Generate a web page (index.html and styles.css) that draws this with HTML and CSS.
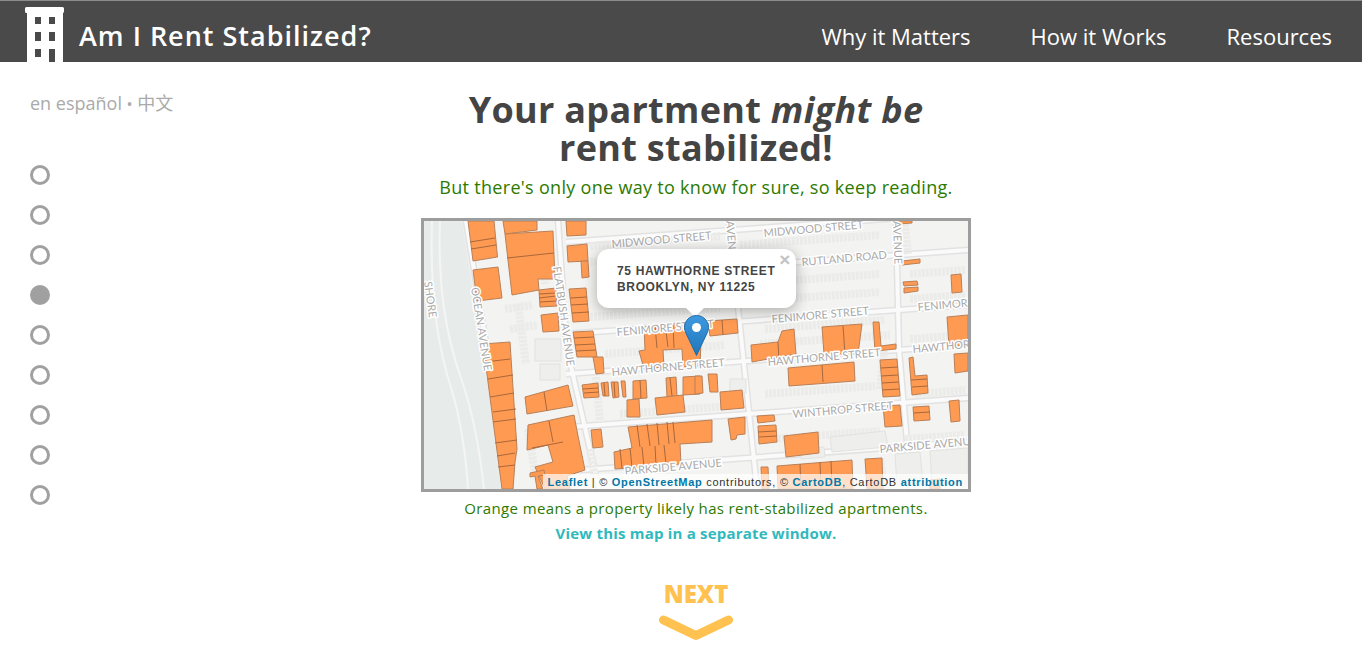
FILE: index.html
```html
<!DOCTYPE html>
<html lang="en">
<head>
    <meta charset="UTF-8">
    <title>Am I Rent Stabilized?</title>
    <link rel="stylesheet" href="styles.css">
</head>
<body>
    <header class="topbar">
        <div class="brand">
            <svg class="logo" viewBox="0 0 39 56" width="39" height="56">
                <path fill="#fff" d="M1.500 1h36a1.500 1.500 0 0 1 1.500 1.500v3a1.500 1.500 0 0 1-1.500 1.500H38v49H2V7h-.5A1.500 1.500 0 0 1 0 5.500v-3A1.500 1.500 0 0 1 1.500 1z"/>
                <path fill="#4a4a4a" d="M10 11h6v7h-6zM24 11h6v7h-6zM10 26h6v9h-6zM24 26h6v9h-6zM10 43h6v8h-6zM24 43h6v13h-6z"/>
            </svg>
            <span class="site-name">Am I Rent Stabilized?</span>
        </div>
        <nav class="topnav">
            <a href="#">Why it Matters</a>
            <a href="#">How it Works</a>
            <a href="#">Resources</a>
        </nav>
    </header>

    <div class="page">
        <aside class="sidebar">
            <div class="lang">en español <span class="sep">•</span> <span class="zh" lang="zh">中文</span></div>
            <ul class="steps">
                <li></li>
                <li></li>
                <li></li>
                <li class="active"></li>
                <li></li>
                <li></li>
                <li></li>
                <li></li>
                <li></li>
            </ul>
        </aside>

        <main class="content">
            <h1>Your apartment <em>might be</em><br>rent stabilized!</h1>
            <p class="lead">But there's only one way to know for sure, so keep reading.</p>

            <div class="map">
                <svg class="tiles" viewBox="424 222 544 268" width="544" height="268">
                    <rect class="land" x="424" y="222" width="544" height="268"/>
                    <path class="park" d="M424 222h38l42 268h-80z"/>
                    <path class="park-path" d="M440 222c-2 60 4 110 22 160 12 36 18 70 22 108M432 222c-2 70 4 120 20 170 10 34 14 66 16 98"/>

                    <g class="roads-casing">
                        <path d="M466 222l44 268M558 222l9 128 32 140M729 222l28 268M896 222l3 128 12 140"/>
                        <path d="M566 243l402-29M730 268l238-17M566 335l402-29M566 375l402-29M570 428l398-29M580 471l388-28"/>
                    </g>
                    <g class="roads">
                        <path d="M466 222l44 268M558 222l9 128 32 140M729 222l28 268M896 222l3 128 12 140"/>
                        <path d="M566 243l402-29M730 268l238-17M566 335l402-29M566 375l402-29M570 428l398-29M580 471l388-28"/>
                    </g>

                    <g class="ghosts">
                        <path d="M590 247l130-10M590 263l130-9M590 318l130-9M740 246l140-10M740 285l140-10M740 303l140-10M605 355l120-9M620 415l110-8M760 345l130-9M765 395l110-8M765 330l120-9M910 275l55-4M910 300l55-4M910 340l55-4M915 395l50-4M770 440l110-8M905 440l60-4M505 310l28-4M510 330l28-4"/>
                        <path d="M518 305l8 60M528 430l8 50M596 378l4 45M590 450l5 30M880 460l5 30M540 235l5 50M905 225l3 30M580 290l-1 12M880 390l4-40"/>
                    </g>
                    <g class="ghost-blocks">
                        <rect x="535" y="340" width="26" height="22"/>
                        <rect x="540" y="365" width="20" height="16"/>
                        <path d="M830 438l55-6 3 16-56 5zM800 450l24-2 1 10-24 2zM930 452l38-3v35l-36 3zM895 455l25-2 3 32-26 1z"/>
                        <rect x="730" y="380" width="16" height="14"/>
                    </g>

                    <g class="lots">
                        <path d="M468 222h26l3.500 36-24.500 4z"/>
                        <path d="M473 271l25-3 4 31-25 3z"/>
                        <path d="M503 222h34v9l-32 4z"/>
                        <path d="M505 235l48-3 2 48h-17l1 11-27 5z"/>
                        <path d="M539 291l17-2 1 18-17 1z"/>
                        <path d="M541 316l17-2 1 18-16 1z"/>
                        <path d="M566 222h20v14l-19 1z"/>
                        <path d="M567 247l20-2 1 17-20 1z"/>
                        <path d="M581 262l7 0 1 16-7 1z"/>
                        <path d="M569 290l17-1 3 33-16 1z"/>
                        <path d="M573 333l20-1 4 26-20 0z"/>
                        <path d="M593 358l10 0 1 16-8 1z"/>
                        <path d="M483 345l27-2 7 107-2 13-2 27h-11z"/>
                        <path d="M525 398l43-12 5 21-46 8z"/>
                        <path d="M528 426l46-10 4 21 7 34-18 6 3 13h-25l-10-22 18-5-5-17-21 5z"/>
                        <path d="M530 474l14-3 1 5-7 1 5 13h-6l-2-13-5 1z"/>
                        <path d="M582 386l16-2 1 14-15 1z"/>
                        <path d="M601 384l7-1 1 14-6 0z"/>
                        <path d="M611 383l7 0 1 15-6 1z"/>
                        <path d="M621 382l4 0 1 16-3 0z"/>
                        <path d="M633 382l13-1 1 18-14 1z"/>
                        <path d="M627 401l12-1 1 18-13 0z"/>
                        <path d="M666 379l10-1 1 19-10 1z"/>
                        <path d="M655 399l28-3 2 17-28 3z"/>
                        <path d="M683 378l17-1v18l-17 1z"/>
                        <path d="M695 377l7 0 1 17-8 1z"/>
                        <path d="M708 375l9 0 1 18-8 0z"/>
                        <path d="M720 393l22-2 2 18-23 2z"/>
                        <path d="M591 431l10-1 2 18-10 1z"/>
                        <path d="M628 428l84-7v22l-32 2 1 20-66 5-1-17 18-4z"/>
                        <path d="M728 420l17-2v17l-8 1-1 4-5 1z"/>
                        <path d="M644 328l26-3 17-1v2l14 15-1 26-17 1-1-18-19 1 1 17-20 2-5-18 6-1z"/>
                        <path d="M708 322l29-2 1 14-28 3z"/>
                        <path d="M751 346l27-3 4-11 12-2 2 25-44 8z"/>
                        <path d="M788 369l66-6 1 19-66 5z"/>
                        <path d="M822 328l40-3-4 30-34 0z"/>
                        <path d="M873 323l6 0 2 24 15-2v5l-21 2z"/>
                        <path d="M951 276l10-1 1 18-10 1z"/>
                        <path d="M902 262l18-2v4l-18 2z"/>
                        <path d="M903 283l14-1 1 4-14 1z"/>
                        <path d="M904 289l14-1v4l-14 2z"/>
                        <path d="M898 222h14v2l-13 1z"/>
                        <path d="M947 318l21-2v31h-19z"/>
                        <path d="M880 361l17-1 3 37-17 1z"/>
                        <path d="M909 359l4-1 2 19 12-1 1 18-16 2z"/>
                        <path d="M954 355l14-1v18l-13 2z"/>
                        <path d="M883 407l17-1 2 21-17 1z"/>
                        <path d="M913 408l16-1 1 14-16 1z"/>
                        <path d="M949 402l10-1 1 21-9 1z"/>
                        <path d="M757 417l17-1 1 6-17 2z"/>
                        <path d="M758 427l18-1 1 17-18 2z"/>
                        <path d="M784 437l34-4 1 21-33 4z"/>
                        <path d="M761 468l7 0 1 22h-7z"/>
                        <path d="M777 467l75-6 1 29h-75z"/>
                        <path d="M865 460l17-1 1 31h-16z"/>
                        <path d="M930 481l10-1v10h-10z"/>
                    </g>
                    <g class="lot-lines">
                        <path d="M470 243l25-4M471 250l25-4M507 259l47-5M539 295l17-1M539 299l17-2M540 303l17-1"/>
                        <path d="M570 299l17-1M571 306l17-1M572 314l17-1M574 339l20-1M575 346l20-1M576 352l20-1"/>
                        <path d="M485 363l25-3M488 380l25-4M490 398l24-4M493 413l23-3M493 423l23-3M495 444l22-3M497 457l18-3M498 468l17-2"/>
                        <path d="M544 393l3 19M549 422l4 21M532 449l31-6"/>
                        <path d="M583 390l15-1M584 394l15-1M604 384l1 13M614 383l1 15M640 381l1 18M670 379l2 18"/>
                        <path d="M637 426l3 22M647 425l3 22M657 424l2 22M667 423l2 22M673 423l2 21M620 450l2 19M630 449l2 19M642 448l2 20M655 447l1 19M664 446l2 19"/>
                        <path d="M655 327l2 22M665 325l3 23M673 325l1 24M722 321l1 15M822 366l1 17M843 327l2 28M778 343l1 19"/>
                        <path d="M881 369l17-1M881 377l17-1M882 384l17-1M882 391l17-1M911 381l16-1M912 388l16-1"/>
                        <path d="M914 414l16-1M758 433l18-1M759 438l18-1M800 465l1 24M820 463l1 26M831 462l1 27"/>
                    </g>

                    <g class="labels">
                        <text transform="translate(612 249) rotate(-5)">MIDWOOD STREET</text>
                        <text transform="translate(764 238) rotate(-5)">MIDWOOD STREET</text>
                        <text transform="translate(802 267) rotate(-5)">RUTLAND ROAD</text>
                        <text transform="translate(617 337) rotate(-5)">FENIMORE STREET</text>
                        <text transform="translate(772 324) rotate(-5)">FENIMORE STREET</text>
                        <text transform="translate(918 312) rotate(-5)">FENIMORE</text>
                        <text transform="translate(612 377) rotate(-5)">HAWTHORNE STREET</text>
                        <text transform="translate(768 367) rotate(-5)">HAWTHORNE STREET</text>
                        <text transform="translate(913 354) rotate(-5)">HAWTHORNE</text>
                        <text transform="translate(793 419) rotate(-5)">WINTHROP STREET</text>
                        <text transform="translate(625 476) rotate(-5)">PARKSIDE AVENUE</text>
                        <text transform="translate(880 454) rotate(-5)">PARKSIDE AVENUE</text>
                        <text transform="translate(471 289) rotate(81)">OCEAN AVENUE</text>
                        <text transform="translate(553 268) rotate(82)">FLATBUSH AVENUE</text>
                        <text transform="translate(726 222) rotate(85)">AVENUE</text>
                        <text transform="translate(893 222) rotate(88)">AVENUE</text>
                        <text transform="translate(424 283) rotate(82)">SHORE</text>
                    </g>
                </svg>

                <div class="attribution">
                    <a href="#">Leaflet</a> | © <a href="#">OpenStreetMap</a> contributors, © <a href="#">CartoDB</a>, CartoDB <a href="#">attribution</a>
                </div>

                <div class="popup">
                    <span class="popup-close">×</span>
                    75 HAWTHORNE STREET<br>BROOKLYN, NY 11225
                </div>

                <svg class="pin" viewBox="0 0 25 41" width="25" height="41">
                    <defs>
                        <linearGradient id="pin-fill" x1="0" y1="0" x2="0" y2="1">
                            <stop offset="0" stop-color="#3d9ae0"/>
                            <stop offset="1" stop-color="#2075b8"/>
                        </linearGradient>
                    </defs>
                    <path fill="url(#pin-fill)" stroke="#1f6dab" d="M12.500 .5C5.900 .5 .5 5.800 .5 12.400c0 2.300 .8 4.500 1.800 6.500L12.500 40.500l10.200-21.600c1-2 1.800-4.200 1.800-6.500C24.500 5.800 19.100 .5 12.500 .5z"/>
                    <circle cx="12.500" cy="12.500" r="4.500" fill="#fff"/>
                </svg>
            </div>

            <p class="caption">Orange means a property likely has rent-stabilized apartments.</p>
            <p class="map-link"><a href="#">View this map in a separate window.</a></p>

            <a class="next" href="#">
                <span>NEXT</span>
                <svg viewBox="0 0 74 26" width="74" height="26">
                    <path fill="none" stroke="#ffc14f" stroke-width="9" stroke-linecap="round" stroke-linejoin="round" d="M4.500 5L37 20.500 69.500 5"/>
                </svg>
            </a>
        </main>
    </div>
</body>
</html>
```

FILE: styles.css
```css
body {
    margin: 0;
    font-family: 'Open Sans', 'Noto Sans CJK SC', sans-serif;
    background-color: #fff;
    color: #444;
    overflow: hidden;
}
a {
    text-decoration: none;
    color: inherit;
}
p {
    margin: 0;
}

/* header */
.topbar {
    height: 61px;
    background-color: #4a4a4a;
    border-top: 1px solid #8c8c8c;
    display: flex;
    justify-content: space-between;
    padding: 0 30px 0 25px;
}
.brand {
    display: flex;
    align-items: flex-end;
    gap: 15px;
}
.logo {
    display: block;
}
.site-name {
    color: #fff;
    font-size: 27px;
    font-weight: 600;
    letter-spacing: 1px;
    line-height: 69px;
    height: 61px;
}
.topnav {
    display: flex;
    gap: 60px;
}
.topnav a {
    color: #fff;
    font-size: 22px;
    line-height: 71px;
    height: 61px;
}

/* left column */
.page {
    display: grid;
    grid-template-columns: 180px 1fr;
    padding-right: 150px;
}
.sidebar {
    padding: 29px 0 0 30px;
}
.lang {
    color: #aaa;
    font-size: 18px;
    line-height: 24px;
}
.sep {
    font-size: 16px;
}
.zh {
    font-size: 18px;
}
.steps {
    list-style: none;
    margin: 49px 0 0;
    padding: 0;
    display: flex;
    flex-direction: column;
    gap: 20px;
}
.steps li {
    width: 20px;
    height: 20px;
    box-sizing: border-box;
    border: 3px solid #a0a0a0;
    border-radius: 50%;
}
.steps .active {
    background-color: #a0a0a0;
}

/* middle column */
.content {
    display: flex;
    flex-direction: column;
    align-items: center;
    text-align: center;
}
h1 {
    margin: 29px 0 0;
    font-size: 36px;
    line-height: 38px;
    font-weight: 700;
    letter-spacing: 0.3px;
    color: #444;
}
.lead {
    margin-top: 8px;
    font-size: 18px;
    line-height: 24px;
    letter-spacing: 0.3px;
    color: #2d7a00;
}
.caption {
    margin-top: 5px;
    font-size: 15px;
    line-height: 22px;
    letter-spacing: 0.37px;
    color: #2d7a00;
}
.map-link {
    margin-top: 3px;
    font-size: 15px;
    line-height: 22px;
    font-weight: 700;
    letter-spacing: 0.2px;
    color: #30b9bd;
}
.next {
    margin-top: 34px;
    display: flex;
    flex-direction: column;
    align-items: center;
    color: #ffc14f;
    font-size: 24px;
    font-weight: 800;
    line-height: 32px;
}
.next svg {
    display: block;
    margin-top: 5px;
}

/* map */
.map {
    margin-top: 19px;
    position: relative;
    width: 544px;
    height: 268px;
    border: 3px solid #9d9d9d;
    overflow: hidden;
}
.tiles {
    display: block;
}
.land {
    fill: #f3f3f1;
}
.park {
    fill: #e7ecea;
}
.park-path {
    fill: none;
    stroke: #f4f5f4;
    stroke-width: 2;
}
.roads-casing path {
    fill: none;
    stroke: #e2e2e2;
    stroke-width: 7;
}
.roads path {
    fill: none;
    stroke: #fafafa;
    stroke-width: 4;
}
.ghosts path {
    fill: none;
    stroke: #ebebe9;
    stroke-width: 8;
    stroke-dasharray: 3 1;
}
.ghost-blocks {
    fill: #eeeeec;
    stroke: #e2e2e0;
    stroke-width: 1;
}
.lots path {
    fill: #ff9a52;
    stroke: #b98058;
    stroke-width: 1;
}
.lot-lines path {
    fill: none;
    stroke: #a8683c;
    stroke-width: 1;
}
.labels text {
    font-family: 'Lato', sans-serif;
    font-size: 11px;
    fill: #a9a9a9;
    stroke: #fff;
    stroke-width: 3px;
    paint-order: stroke;
    stroke-linejoin: round;
}
.attribution {
    position: absolute;
    right: 0;
    bottom: 0;
    padding: 0 5px;
    height: 15px;
    font-family: 'Liberation Sans', sans-serif;
    font-size: 11px;
    line-height: 16px;
    letter-spacing: 0.72px;
    color: #333;
    background-color: rgba(255, 255, 255, 0.7);
    white-space: nowrap;
}
.attribution a {
    color: #0078a8;
    font-weight: 700;
}
.popup {
    position: absolute;
    left: 173px;
    top: 28px;
    width: 159px;
    height: 41px;
    padding: 14px 20px 4px;
    background-color: #fff;
    border-radius: 12px;
    box-shadow: 0 3px 14px rgba(0, 0, 0, 0.3);
    font-family: 'Liberation Sans', sans-serif;
    font-size: 12px;
    font-weight: 700;
    line-height: 16px;
    letter-spacing: 0.65px;
    color: #444;
    text-align: left;
    white-space: nowrap;
}
.popup::after {
    content: "";
    position: absolute;
    left: 89px;
    bottom: -9px;
    width: 18px;
    height: 18px;
    background-color: #fff;
    transform: rotate(45deg) scale(0.7);
}
.popup-close {
    position: absolute;
    right: 5px;
    top: 0;
    color: #c3c3c3;
    font-size: 19px;
    line-height: 22px;
}
.pin {
    position: absolute;
    left: 260px;
    top: 94px;
}
```
